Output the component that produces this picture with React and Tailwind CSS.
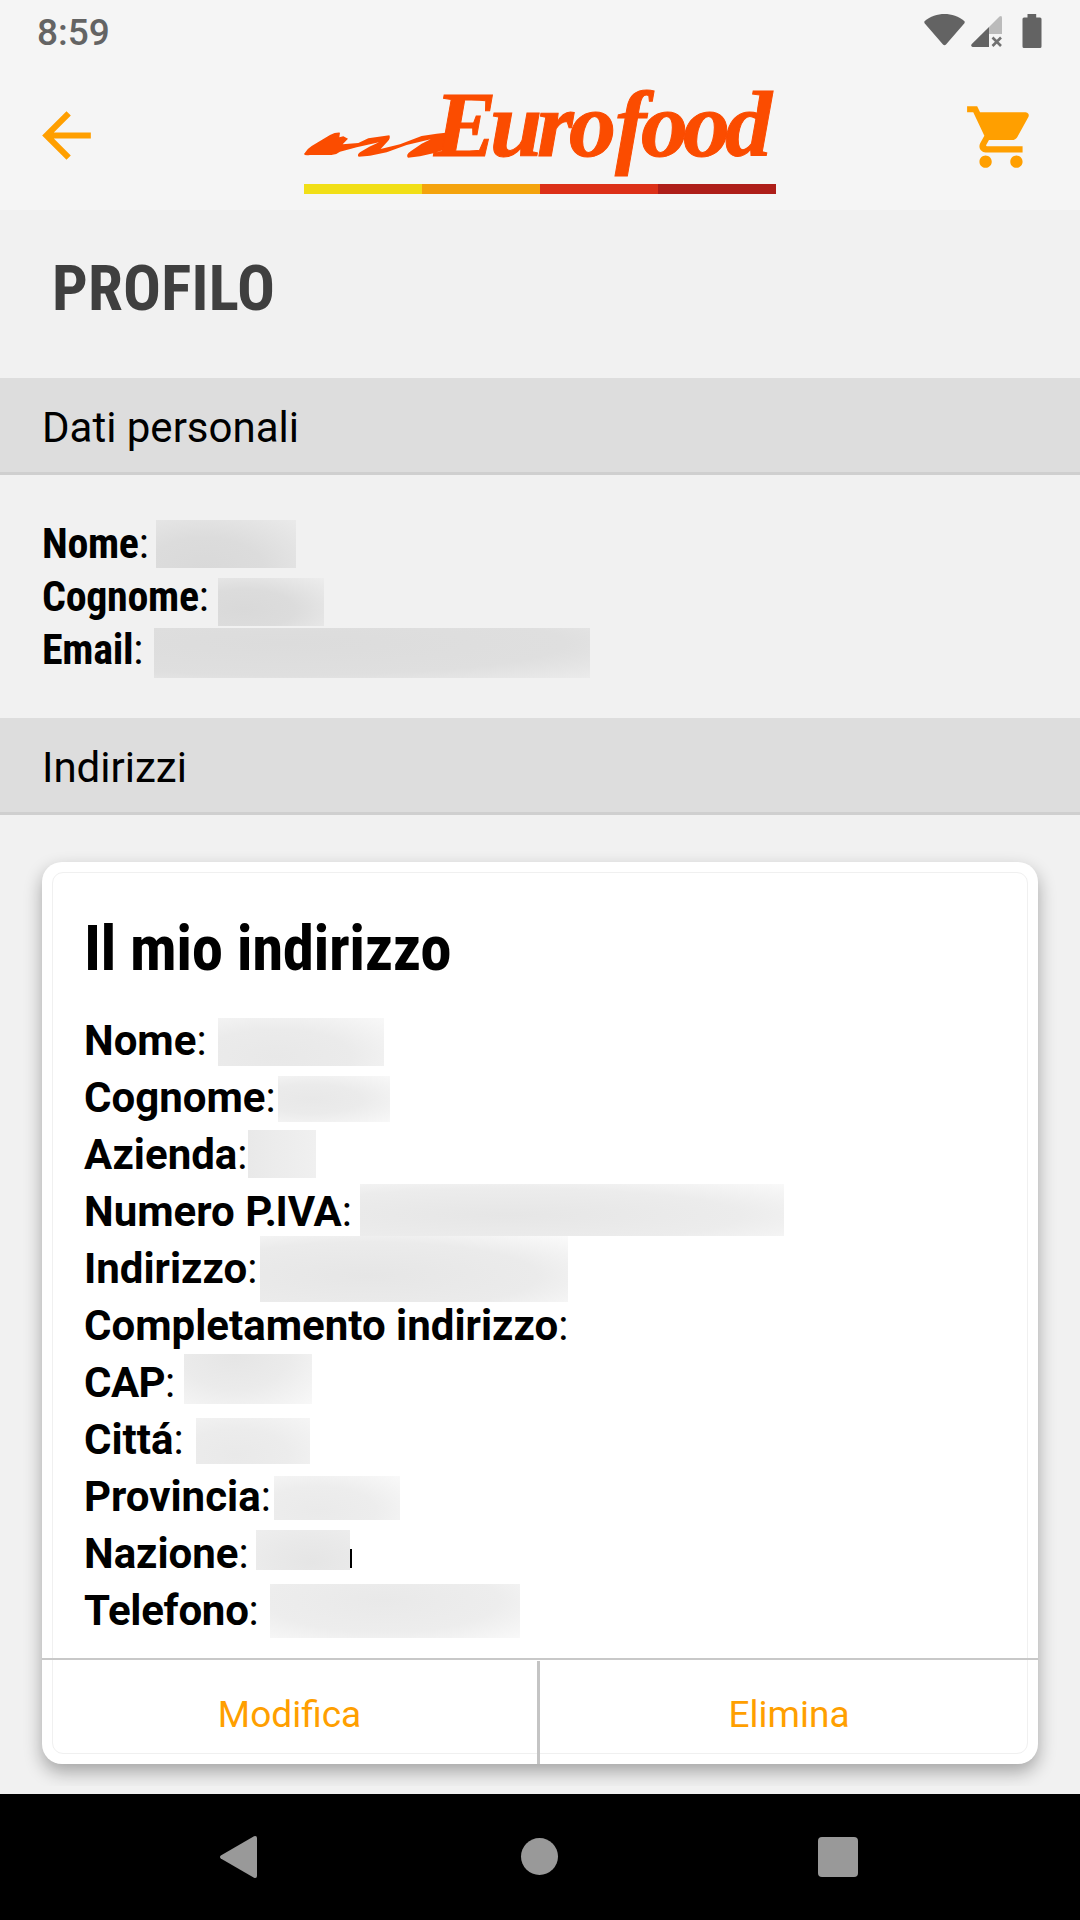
import React from "react";
import { MdArrowBack, MdShoppingCart } from "react-icons/md";

function StatusBar() {
  return (
    <div className="flex h-[62px] items-start justify-between pl-[37px] pr-[38px]">
      <span className="mt-[12px] text-[37px] font-medium leading-[42px] text-[#646464]">8:59</span>
      <div className="flex items-start pt-[14px] text-[#636363]">
        <svg className="h-[32px] w-[41px]" viewBox="0 0 41 32" fill="currentColor">
          <path d="M.5 7.2C12-2.3 29-2.3 40.500 7.200Q41 8.500 40.200 9.500L22 30.500Q20.500 32 19 30.500L.8 9.500Q0 8.500 .5 7.200Z" />
        </svg>
        <svg className="ml-[6px] mt-[1px] h-[33px] w-[32px]" viewBox="0 0 32 33" fill="currentColor">
          <path opacity=".4" d="M18 12 28.500 1.500Q31 0 31 3V19H18Z" />
          <path d="M18 12V32H1.500Q-.8 31 .8 29Z" />
          <path d="M21.500 22.500 30 31M30 22.500 21.500 31" stroke="currentColor" strokeWidth="2.600" opacity=".9" />
        </svg>
        <svg className="ml-[19px] h-[34px] w-[20px]" viewBox="0 0 20 34" fill="currentColor">
          <path d="M5.500 0H14.200V3.500H18Q19.500 3.500 19.500 5V32.500Q19.500 34 18 34H2Q.5 34 .5 32.500V5Q.5 3.500 2 3.500H5.500Z" />
        </svg>
      </div>
    </div>
  );
}

function Logo() {
  return (
    <svg
      className="h-[138px] w-[480px]"
      viewBox="300 62 480 138"
      fill="#fb4c00"
      role="img"
      aria-label="Eurofood"
    >
      <path
        transform="translate(290 75) scale(.3333)"
        d="M42 237Q50 222 65 213L120 180Q136 172 150 173L148 187 160 184 174 191 158 208 205 204 235 190 298 181Q303 190 292 200L272 222 330 208 395 183 440 176 480 172 476 243 458 226 430 235 390 244 354 248Q346 240 362 229L395 206 422 193 350 210 290 232 240 242 206 245Q200 240 210 232L238 215 267 202 200 217 150 230Q135 242 120 240L60 240Q44 243 42 237Z"
      />
      <text
        fontFamily="'Liberation Serif', serif"
        fontStyle="italic"
        fontWeight="700"
        fontSize="94"
        stroke="#fb4c00"
        strokeWidth="1"
        y="156"
        x="434 490 537 569 615 641 683 725"
      >
        Eurofood
      </text>
      <g shapeRendering="crispEdges">
        <rect x="304" y="184" width="118" height="10" fill="#f1df17" />
        <rect x="422" y="184" width="118" height="10" fill="#f4a30d" />
        <rect x="540" y="184" width="118" height="10" fill="#dc3018" />
        <rect x="658" y="184" width="118" height="10" fill="#ae1e19" />
      </g>
    </svg>
  );
}

function Header() {
  return (
    <header className="h-[210px] bg-[#f5f5f5]">
      <StatusBar />
      <div className="flex items-start pl-[30px] pr-[42px]">
        <MdArrowBack className="mt-[37px] size-[73px] text-[#ff9f00]" />
        <div className="ml-[197px] mr-auto">
          <Logo />
        </div>
        <MdShoppingCart className="mt-[38px] size-[74px] text-[#ff9f00]" />
      </div>
    </header>
  );
}

function SectionBar({ children }) {
  return (
    <h2 className="h-[97px] border-b-[3px] border-[#cfcfcf] bg-[#dddddd] pl-[42px] pt-[25px] text-[42px] leading-[49px]">
      {children}
    </h2>
  );
}

const personal = [
  { label: "Nome", mask: "left-[114px] top-[3px] w-[140px] h-[48px] bg-[radial-gradient(ellipse_at_35%_100%,#d9d9d9_0%,#dcdcdc_45%,#eaeaea_100%)]" },
  { label: "Cognome", mask: "left-[176px] top-[8px] w-[106px] h-[48px] bg-[radial-gradient(ellipse_at_25%_65%,#d9d9d9_0%,#dcdcdc_45%,#ededed_100%)]" },
  { label: "Email", mask: "left-[112px] top-[5px] w-[436px] h-[50px] bg-[radial-gradient(ellipse_at_30%_30%,#dcdcdc_0%,#dfdfdf_65%,#ebebeb_100%)]" },
];

const address = [
  { label: "Nome", mask: "left-[134px] top-[6px] w-[166px] h-[48px] bg-[radial-gradient(ellipse_at_35%_80%,#e8e8e8_0%,#ebebeb_50%,#f8f8f8_100%)]" },
  { label: "Cognome", mask: "left-[194px] top-[7px] w-[112px] h-[46px] bg-[radial-gradient(ellipse_at_30%_50%,#e8e8e8_0%,#ebebeb_45%,#f8f8f8_100%)]" },
  { label: "Azienda", mask: "left-[164px] top-[4px] w-[68px] h-[48px] bg-linear-to-r from-[#e9e9e9] to-[#f0f0f0]" },
  { label: "Numero P.IVA", mask: "left-[276px] top-[1px] w-[424px] h-[52px] bg-[radial-gradient(ellipse_at_35%_60%,#e6e6e6_0%,#ececec_60%,#f9f9f9_100%)]" },
  { label: "Indirizzo", mask: "left-[176px] top-[-4px] w-[308px] h-[66px] bg-[radial-gradient(ellipse_at_35%_60%,#e6e6e6_0%,#ebebeb_60%,#fbfbfb_100%)]" },
  { label: "Completamento indirizzo" },
  { label: "CAP", mask: "left-[100px] top-0 w-[128px] h-[50px] bg-[radial-gradient(ellipse_at_40%_0%,#e5e5e5_0%,#ebebeb_50%,#f8f8f8_100%)]" },
  { label: "Cittá", mask: "left-[112px] top-[7px] w-[114px] h-[46px] bg-[radial-gradient(ellipse_at_35%_80%,#e9e9e9_0%,#ececec_50%,#f5f5f5_100%)]" },
  { label: "Provincia", mask: "left-[190px] top-[8px] w-[126px] h-[44px] bg-[radial-gradient(ellipse_at_35%_80%,#eaeaea_0%,#ededed_50%,#f9f9f9_100%)]" },
  { label: "Nazione", mask: "left-[172px] top-[5px] w-[94px] h-[40px] bg-[radial-gradient(ellipse_at_60%_80%,#e5e5e5_0%,#e9e9e9_50%,#eeeeee_100%)]", caret: true },
  { label: "Telefono", mask: "left-[186px] top-[2px] w-[250px] h-[54px] bg-[radial-gradient(ellipse_at_45%_30%,#e9e9e9_0%,#ededed_60%,#f9f9f9_100%)]" },
];

function FieldLabel({ label }) {
  if (label === "Numero P.IVA") {
    return (
      <>
        Numero <span className="tracking-[-7.500px]">P</span>
        <span className="tracking-[-1.500px]">.</span>IVA
      </>
    );
  }
  if (label === "CAP") return <span className="tracking-[-0.600px]">CAP</span>;
  if (label === "Telefono") return <span className="tracking-[-0.250px]">Telefono</span>;
  return label;
}

function Field({ label, mask, caret, className }) {
  return (
    <div className={"relative whitespace-nowrap text-[42px] " + className}>
      <strong className="font-bold">
        <FieldLabel label={label} />
      </strong>
      <span className="font-normal">:</span>
      {mask && <span className={"absolute " + mask} />}
      {caret && <span className="absolute left-[266px] top-[24px] h-[19px] w-[1.500px] bg-black" />}
    </div>
  );
}

function AddressCard() {
  return (
    <div className="relative mx-[42px] mt-[47px] flex h-[902px] flex-col rounded-[20px] bg-white shadow-[0_8px_18px_rgba(0,0,0,0.32)]">
      <div className="pointer-events-none absolute inset-[10px] rounded-[11px] border border-[#f0f0f0]" />
      <div className="h-[796px] pl-[42px] pt-[49px]">
        <h3 className="h-[101px] font-['Roboto_Condensed',Roboto,sans-serif] text-[63px] font-bold leading-[75px] tracking-[-0.450px] [font-stretch:75%]">
          Il mio indirizzo
        </h3>
        {address.map((f) => (
          <Field key={f.label} {...f} className="h-[57px] leading-[57px]" />
        ))}
      </div>
      <div className="relative flex h-[106px] border-t-2 border-[#c8c8c8] pt-px text-[37px] text-[#ff9f00]">
        <button className="w-[498px] border-r-[3px] border-[#c4c4c4] pt-[4px]">Modifica</button>
        <button className="flex-1 pt-[4px]">Elimina</button>
      </div>
    </div>
  );
}

function NavigationBar() {
  return (
    <nav className="flex h-[126px] items-start bg-black pl-[219px] pt-[41px] text-[#999999]">
      <svg className="h-[44px] w-[39px]" viewBox="0 0 39 44" fill="currentColor">
        <path d="M1.800 20.500 35 1.300Q38 .5 38 3V41Q38 43.500 35 42.700L1.800 23.500Q.2 22 1.800 20.500Z" />
      </svg>
      <span className="ml-[263px] mt-[3px] size-[37px] rounded-full bg-[#999999]" />
      <span className="ml-[260px] mt-[2px] size-[40px] rounded-[4px] bg-[#999999]" />
    </nav>
  );
}

export default function App() {
  return (
    <div className="flex h-[1920px] w-[1080px] flex-col overflow-hidden bg-[#f1f1f1] font-[Roboto,sans-serif] text-black">
      <Header />
      <h1 className="h-[168px] pl-[52px] pt-[41px] font-['Roboto_Condensed',Roboto,sans-serif] text-[63px] font-bold leading-[75px] tracking-[0.200px] text-[#3f3f3f] [font-stretch:75%]">
        PROFILO
      </h1>
      <SectionBar>Dati personali</SectionBar>
      <div className="h-[243px] pl-[42px] pt-[42px]">
        {personal.map((f) => (
          <Field
            key={f.label}
            {...f}
            className="h-[53px] font-['Roboto_Condensed',Roboto,sans-serif] leading-[53px] tracking-[-0.300px] [font-stretch:75%]"
          />
        ))}
      </div>
      <SectionBar>Indirizzi</SectionBar>
      <div className="mb-[8px] flex h-[971px] flex-col overflow-hidden">
        <AddressCard />
      </div>
      <NavigationBar />
    </div>
  );
}
